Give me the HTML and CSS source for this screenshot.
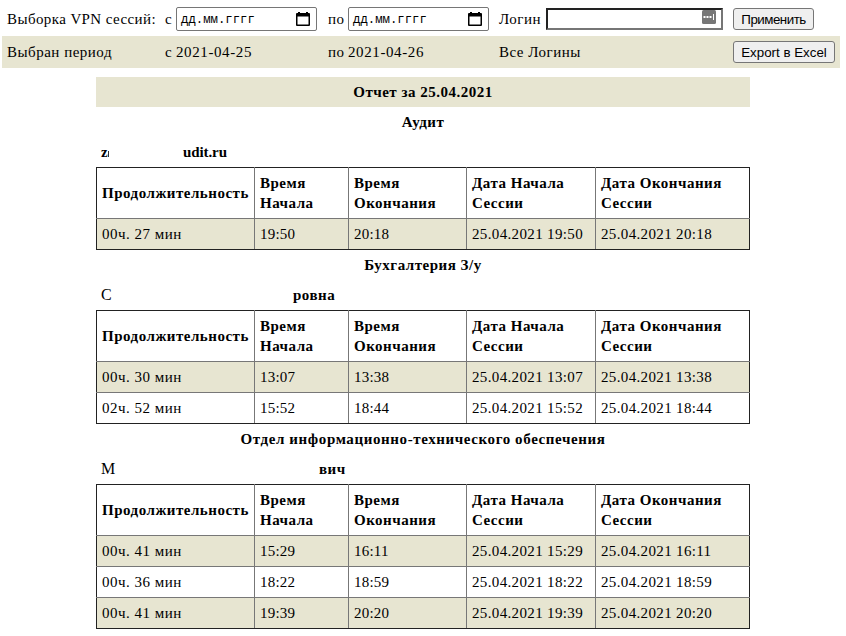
FILE: index.html
```html
<!DOCTYPE html>
<html lang="ru">
<head>
<meta charset="utf-8">
<title>VPN сессии</title>
<link rel="stylesheet" href="styles.css">
</head>
<body>
<form class="filter">
  <div class="frow">
    <div class="wide">Выборка VPN сессий:</div>
    <div class="cell"><span class="pre from">с</span><span class="date"><span>дд.мм.гггг</span><svg width="14" height="14" viewBox="0 0 14 14"><path fill="#000" fill-rule="evenodd" d="M2 0h2v1h6V0h2v1h1a1 1 0 0 1 1 1v11a1 1 0 0 1-1 1H1a1 1 0 0 1-1-1V2a1 1 0 0 1 1-1h1zM1.5 4.5v8h11v-8z"/></svg></span></div>
    <div class="cell"><span class="pre to">по</span><span class="date"><span>дд.мм.гггг</span><svg width="14" height="14" viewBox="0 0 14 14"><path fill="#000" fill-rule="evenodd" d="M2 0h2v1h6V0h2v1h1a1 1 0 0 1 1 1v11a1 1 0 0 1-1 1H1a1 1 0 0 1-1-1V2a1 1 0 0 1 1-1h1zM1.5 4.5v8h11v-8z"/></svg></span></div>
    <div class="cell"><span class="pre login-label">Логин</span><span class="login"><svg width="14" height="14" viewBox="0 0 14 14"><rect width="14" height="14" rx="1.5" fill="#777"/><path fill="#fff" d="M1.5 6h2v2h-2zM4.5 6h2v2h-2zM7.5 6h2v2h-2zM11 4h1v6h-1z"/></svg></span></div>
    <div class="cell"><button type="button" class="apply">Применить</button></div>
  </div>
  <div class="frow shaded">
    <div class="period">Выбран период</div>
    <div class="cell"><span class="pre from">с</span><span class="day">2021-04-25</span></div>
    <div class="cell"><span class="pre to">по</span><span class="day">2021-04-26</span></div>
    <div class="all">Все Логины</div>
    <div class="cell"><button type="button" class="export">Export в Excel</button></div>
  </div>
</form>
<main class="report">
  <h1>Отчет за 25.04.2021</h1>

  <h2>Аудит</h2>
  <h3><span class="first z">z<i class="cut"></i></span><span class="mail">udit.ru</span></h3>
  <table>
    <thead><tr><th class="c1">Продолжительность</th><th class="c2">Время<br>Начала</th><th class="c3">Время<br>Окончания</th><th class="c4">Дата Начала<br>Сессии</th><th class="c5">Дата Окончания<br>Сессии</th></tr></thead>
    <tbody>
      <tr><td>00ч. 27 мин</td><td>19:50</td><td>20:18</td><td>25.04.2021 19:50</td><td>25.04.2021 20:18</td></tr>
    </tbody>
  </table>

  <h2>Бухгалтерия З/у</h2>
  <h3><span class="first s">С</span><span>ровна</span></h3>
  <table>
    <thead><tr><th class="c1">Продолжительность</th><th class="c2">Время<br>Начала</th><th class="c3">Время<br>Окончания</th><th class="c4">Дата Начала<br>Сессии</th><th class="c5">Дата Окончания<br>Сессии</th></tr></thead>
    <tbody>
      <tr><td>00ч. 30 мин</td><td>13:07</td><td>13:38</td><td>25.04.2021 13:07</td><td>25.04.2021 13:38</td></tr>
      <tr><td>02ч. 52 мин</td><td>15:52</td><td>18:44</td><td>25.04.2021 15:52</td><td>25.04.2021 18:44</td></tr>
    </tbody>
  </table>

  <h2 class="long">Отдел информационно-технического обеспечения</h2>
  <h3><span class="first m">М</span><span>вич</span></h3>
  <table>
    <thead><tr><th class="c1">Продолжительность</th><th class="c2">Время<br>Начала</th><th class="c3">Время<br>Окончания</th><th class="c4">Дата Начала<br>Сессии</th><th class="c5">Дата Окончания<br>Сессии</th></tr></thead>
    <tbody>
      <tr><td>00ч. 41 мин</td><td>15:29</td><td>16:11</td><td>25.04.2021 15:29</td><td>25.04.2021 16:11</td></tr>
      <tr><td>00ч. 36 мин</td><td>18:22</td><td>18:59</td><td>25.04.2021 18:22</td><td>25.04.2021 18:59</td></tr>
      <tr><td>00ч. 41 мин</td><td>19:39</td><td>20:20</td><td>25.04.2021 19:39</td><td>25.04.2021 20:20</td></tr>
    </tbody>
  </table>
</main>
</body>
</html>
```
FILE: styles.css
```css
* { box-sizing: border-box; }
body {
  margin: 0;
  padding: 3px 0 0 2px;
  background: #fff;
  color: #000;
  font: 15px/20px "Liberation Serif", "Times New Roman", serif;
}
.filter { width: 838px; margin: 0; }
.frow {
  display: grid;
  grid-template-columns: 158px 163px 171px 234px 1fr;
  align-items: center;
  height: 32px;
  padding-left: 5px;
  white-space: nowrap;
  letter-spacing: 0.5px;
}
.wide { letter-spacing: 0.4px; }
.day { letter-spacing: 0.6px; }
.frow + .frow { margin-top: 1px; }
.shaded { background: #e7e5d1; }
.cell { display: flex; align-items: center; }
.pre { flex: none; }
.from { width: 11px; }
.to { width: 20px; }
.login-label { width: 47px; }
.date {
  display: flex;
  align-items: center;
  justify-content: space-between;
  width: 141px;
  height: 24px;
  padding: 0 6px 0 4px;
  border: 1px solid #767676;
  border-radius: 2px;
  background: #fff;
  font: 12.3px/20px "Liberation Mono", "Courier New", monospace;
  letter-spacing: 0;
}
.date span { padding-top: 2px; }
.login {
  display: flex;
  justify-content: flex-end;
  width: 177px;
  height: 22px;
  padding: 0 5px;
  border: 2px solid #767676;
  border-top-color: #222;
  border-left-color: #222;
}
button {
  height: 22px;
  padding: 1px 0 0;
  border: 1px solid #767676;
  border-radius: 3px;
  background: #efefef;
  color: #000;
  font: 13.333px/18px "Liberation Sans", Arial, sans-serif;
}
.apply { width: 81px; letter-spacing: -0.5px; }
.export { width: 102px; }
.report { width: 654px; margin: 9px 0 0 94px; }
h1, h2, h3 {
  height: 30px;
  margin: 0;
  font-size: 15px;
  line-height: 30px;
  font-weight: bold;
  text-align: center;
  letter-spacing: 0.5px;
}
h1 { background: #e7e5d1; }
.long { letter-spacing: 0.6px; }
.mail { letter-spacing: -0.1px; }
h3 { display: flex; padding-left: 5px; }
.first { display: flex; text-align: left; letter-spacing: 0; }
.z { width: 82px; align-items: center; }
.s { width: 192px; font-weight: normal; font-size: 16px; }
.m { width: 218px; font-weight: normal; font-size: 16px; }
.cut { width: 1px; height: 6px; margin-top: 3px; background: #333; }
table {
  width: 654px;
  table-layout: fixed;
  border-collapse: collapse;
  border: 1px solid #222;
}
th, td {
  height: 31px;
  padding: 0 5px;
  border: 1px solid #777;
  text-align: left;
  white-space: nowrap;
  letter-spacing: 0.35px;
}
th { height: 51px; letter-spacing: 0.5px; }
td:first-child { letter-spacing: 0.5px; }
td:nth-child(2), td:nth-child(3) { letter-spacing: 0.2px; }
tr > :first-child { border-left-color: #222; }
tr > :last-child { border-right-color: #222; }
thead th { border-top-color: #222; }
tbody tr:last-child td { border-bottom-color: #222; }
tbody tr:nth-child(odd) { background: #e7e5d1; }
.c1 { width: 158px; }
.c2 { width: 94px; }
.c3 { width: 118px; }
.c4 { width: 129px; }
.c5 { width: 154px; }
```
